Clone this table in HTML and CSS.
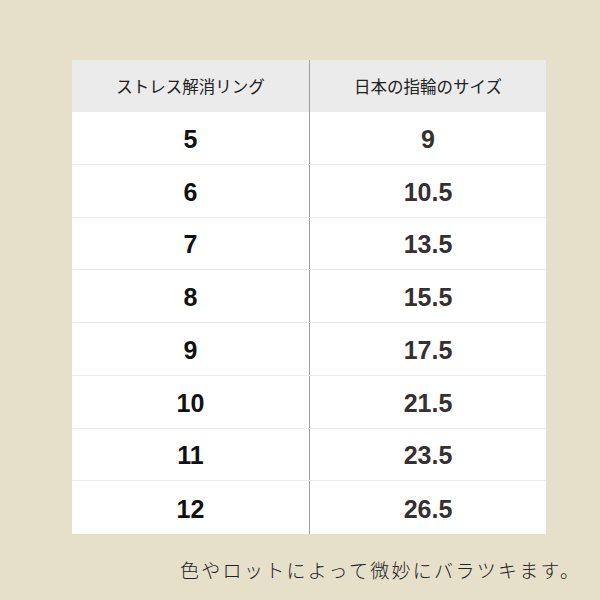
FILE: index.html
```html
<!DOCTYPE html>
<html lang="ja">
<head>
<meta charset="utf-8">
<link rel="stylesheet" href="styles.css">
</head>
<body>
<div class="page">
  <div class="table">
    <div class="row head">
      <div class="cell left">ストレス解消リング</div>
      <div class="cell right">日本の指輪のサイズ</div>
    </div>
    <div class="row"><div class="cell left">5</div><div class="cell right">9</div></div>
    <div class="row"><div class="cell left">6</div><div class="cell right">10.5</div></div>
    <div class="row"><div class="cell left">7</div><div class="cell right">13.5</div></div>
    <div class="row"><div class="cell left">8</div><div class="cell right">15.5</div></div>
    <div class="row"><div class="cell left">9</div><div class="cell right">17.5</div></div>
    <div class="row"><div class="cell left">10</div><div class="cell right">21.5</div></div>
    <div class="row"><div class="cell left">11</div><div class="cell right">23.5</div></div>
    <div class="row last"><div class="cell left">12</div><div class="cell right">26.5</div></div>
  </div>
  <p class="note">色やロットによって微妙にバラツキます。</p>
</div>
</body>
</html>
```
FILE: styles.css
```css
html, body {
  margin: 0;
  padding: 0;
  background: #e6dfc9;
}
.page {
  width: 600px;
  height: 600px;
  padding-top: 60px;
  box-sizing: border-box;
}
.table {
  margin-left: 72px;
  width: 474px;
  background: #fff;
}
.row {
  display: grid;
  grid-template-columns: 237px 237px;
  height: 52.75px;
  box-sizing: border-box;
  border-bottom: 1px solid #ececec;
}
.row.last { border-bottom: none; }
.row.head {
  height: 52px;
  background: #ebebeb;
  border-bottom: none;
}
.cell {
  display: flex;
  align-items: center;
  justify-content: center;
  padding-top: 3px;
  font-family: "Liberation Sans", Arial, sans-serif;
  font-weight: bold;
  font-size: 25px;
  color: #111;
}
.cell.right {
  border-left: 1px solid #a0a0a0;
  color: #363030;
}
.head .cell {
  padding-top: 0;
  font-family: "Noto Sans CJK JP", sans-serif;
  font-weight: 400;
  font-size: 16.5px;
  color: #222;
}
.note {
  margin: 22px 0 0 0;
  padding-left: 180px;
  font-family: "Noto Sans CJK JP", sans-serif;
  font-weight: 300;
  font-size: 19px;
  letter-spacing: 2.3px;
  color: #222;
  white-space: nowrap;
}
```
